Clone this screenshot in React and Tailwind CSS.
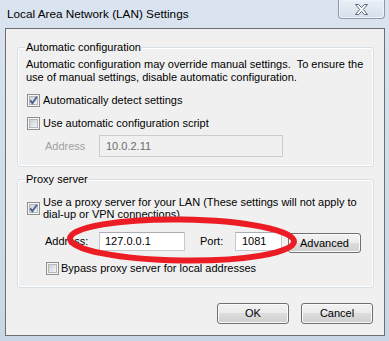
import React from "react";

function CheckBox({ checked }) {
  return (
    <svg width="13" height="13" viewBox="0 0 13 13" className="shrink-0 block">
      <defs>
        <linearGradient id="cbfill" x1="0" y1="0" x2="1" y2="1">
          <stop offset="0" stopColor="#c9cdd3" />
          <stop offset="1" stopColor="#f7f7f7" />
        </linearGradient>
      </defs>
      <rect x="0.5" y="0.5" width="12" height="12" fill="#f5f5f5" stroke="#8e8f8f" />
      <rect x="2.5" y="2.5" width="8" height="8" fill="url(#cbfill)" stroke="#b3b7bd" />
      {checked && (
        <path d="M3.2 6.4 L5.4 9.2 L9.9 2.8" fill="none" stroke="#4b5f92" strokeWidth="1.9" strokeLinejoin="miter" />
      )}
    </svg>
  );
}

function Button({ children, className = "" }) {
  return (
    <div
      className={
        "flex items-center justify-center rounded-[3px] border border-[#707070] bg-[linear-gradient(#f2f2f2_0%,#ebebeb_50%,#dddddd_50%,#cfcfcf_100%)] shadow-[inset_0_0_0_1px_#fbfbfb] text-[11px] text-black " +
        className
      }
    >
      {children}
    </div>
  );
}

function Group({ title, children, className = "" }) {
  return (
    <div className={"relative rounded-[3px] border border-[#d5dfe5] shadow-[inset_0_0_0_1px_#ffffff] " + className}>
      <div className="absolute left-[7px] top-[-7px] bg-[#f0f0f0] px-[1px] text-[11px] leading-[13px] text-black">
        {title}
      </div>
      {children}
    </div>
  );
}

export default function App() {
  return (
    <div className="relative w-[389px] h-[341px] overflow-hidden bg-[linear-gradient(to_bottom,#dae4f0,#c8d6e6)] font-['Liberation_Sans',Arial,sans-serif] text-black">
      {/* Title bar */}
      <div className="flex h-[28px] items-start justify-between">
        <div className="pl-[7px] pt-[7px] text-[11.75px] leading-[14px] text-black">
          Local Area Network (LAN) Settings
        </div>
        <div className="mr-[4px] flex h-[19px] w-[47px] items-center justify-center rounded-b-[4px] border border-t-0 border-[#8d9bab] bg-[linear-gradient(#e9eff6,#d6e0eb)] shadow-[inset_0_0_0_1px_#eef3f8]">
          <svg width="13" height="11" viewBox="0 0 13 11" className="block">
            <path
              d="M0.5 0.5 L3.7 0.5 L6.5 3.6 L9.3 0.5 L12.5 0.5 L8.3 5.5 L12.5 10.5 L9.3 10.5 L6.5 7.4 L3.7 10.5 L0.5 10.5 L4.7 5.5 Z"
              fill="#ffffff"
              stroke="#5b6776"
              strokeWidth="1"
              strokeLinejoin="round"
            />
          </svg>
        </div>
      </div>

      {/* Client area */}
      <div className="ml-[5px] flex h-[308px] w-[380px] flex-col border border-[#6f6f6f] bg-[#f0f0f0] pl-[11px] pr-[10px]">
        {/* Automatic configuration */}
        <Group title="Automatic configuration" className="mt-[18px]">
          <div className="pl-[8px] pt-[10px] text-[11px] leading-[13px] whitespace-pre">
            {"Automatic configuration may override manual settings.  To ensure the"}
            <br />
            {"use of manual settings, disable automatic configuration."}
          </div>
          <div className="mt-[10px] flex h-[13px] items-center pl-[9px]">
            <CheckBox checked />
            <span className="ml-[3px] text-[11px] leading-[13px]">Automatically detect settings</span>
          </div>
          <div className="mt-[10px] flex h-[13px] items-center pl-[9px]">
            <CheckBox />
            <span className="ml-[3px] text-[11px] leading-[13px]">Use automatic configuration script</span>
          </div>
          <div className="mt-[5px] flex items-center pb-[9px] pl-[27px]">
            <span className="w-[54px] text-[11px] leading-[13px] text-[#a0a0a0]">Address</span>
            <div className="flex h-[22px] w-[184px] items-center border border-[#c9cdd2] bg-[#f0f0f0] pl-[6px] text-[11px] text-[#6d6d6d]">
              10.0.2.11
            </div>
          </div>
        </Group>

        {/* Proxy server */}
        <Group title="Proxy server" className="mt-[12px]">
          <div className="flex items-center pl-[9px] pt-[16px]">
            <CheckBox checked />
            <span className="ml-[3px] text-[11px] leading-[12px]">
              Use a proxy server for your LAN (These settings will not apply to
              <br />
              dial-up or VPN connections).
            </span>
          </div>
          <div className="mt-[12px] flex items-start pl-[27px]">
            <span className="flex h-[19px] w-[54px] items-center text-[11px]">Address:</span>
            <div className="flex h-[19px] w-[86px] items-center border border-[#c6cad0] border-t-[#abadb3] bg-white pl-[5px] text-[11px]">
              127.0.0.1
            </div>
            <span className="ml-[15px] flex h-[19px] w-[35px] items-center text-[11px]">Port:</span>
            <div className="flex h-[19px] w-[47px] items-center border border-[#c6cad0] border-t-[#abadb3] bg-white pl-[6px] text-[11px]">
              1081
            </div>
            <Button className="ml-[6px] mt-[1px] h-[20px] w-[73px]">Advanced</Button>
          </div>
          <div className="mt-[9px] flex h-[13px] items-center pb-0 pl-[28px]">
            <CheckBox />
            <span className="ml-[2px] text-[11px] leading-[13px]">Bypass proxy server for local addresses</span>
          </div>
          <div className="h-[12px]" />
        </Group>

        {/* Buttons */}
        <div className="mt-[15px] flex justify-end gap-[12px] pr-[1px]">
          <Button className="h-[21px] w-[72px]">OK</Button>
          <Button className="h-[21px] w-[72px]">Cancel</Button>
        </div>
      </div>

      {/* Red annotation ellipse */}
      <svg className="pointer-events-none absolute left-0 top-0" width="389" height="341" viewBox="0 0 389 341">
        <ellipse cx="182" cy="240" rx="112" ry="20.5" fill="none" stroke="#ec1c24" strokeWidth="6" transform="rotate(0.8 182 240)" />
      </svg>
    </div>
  );
}
